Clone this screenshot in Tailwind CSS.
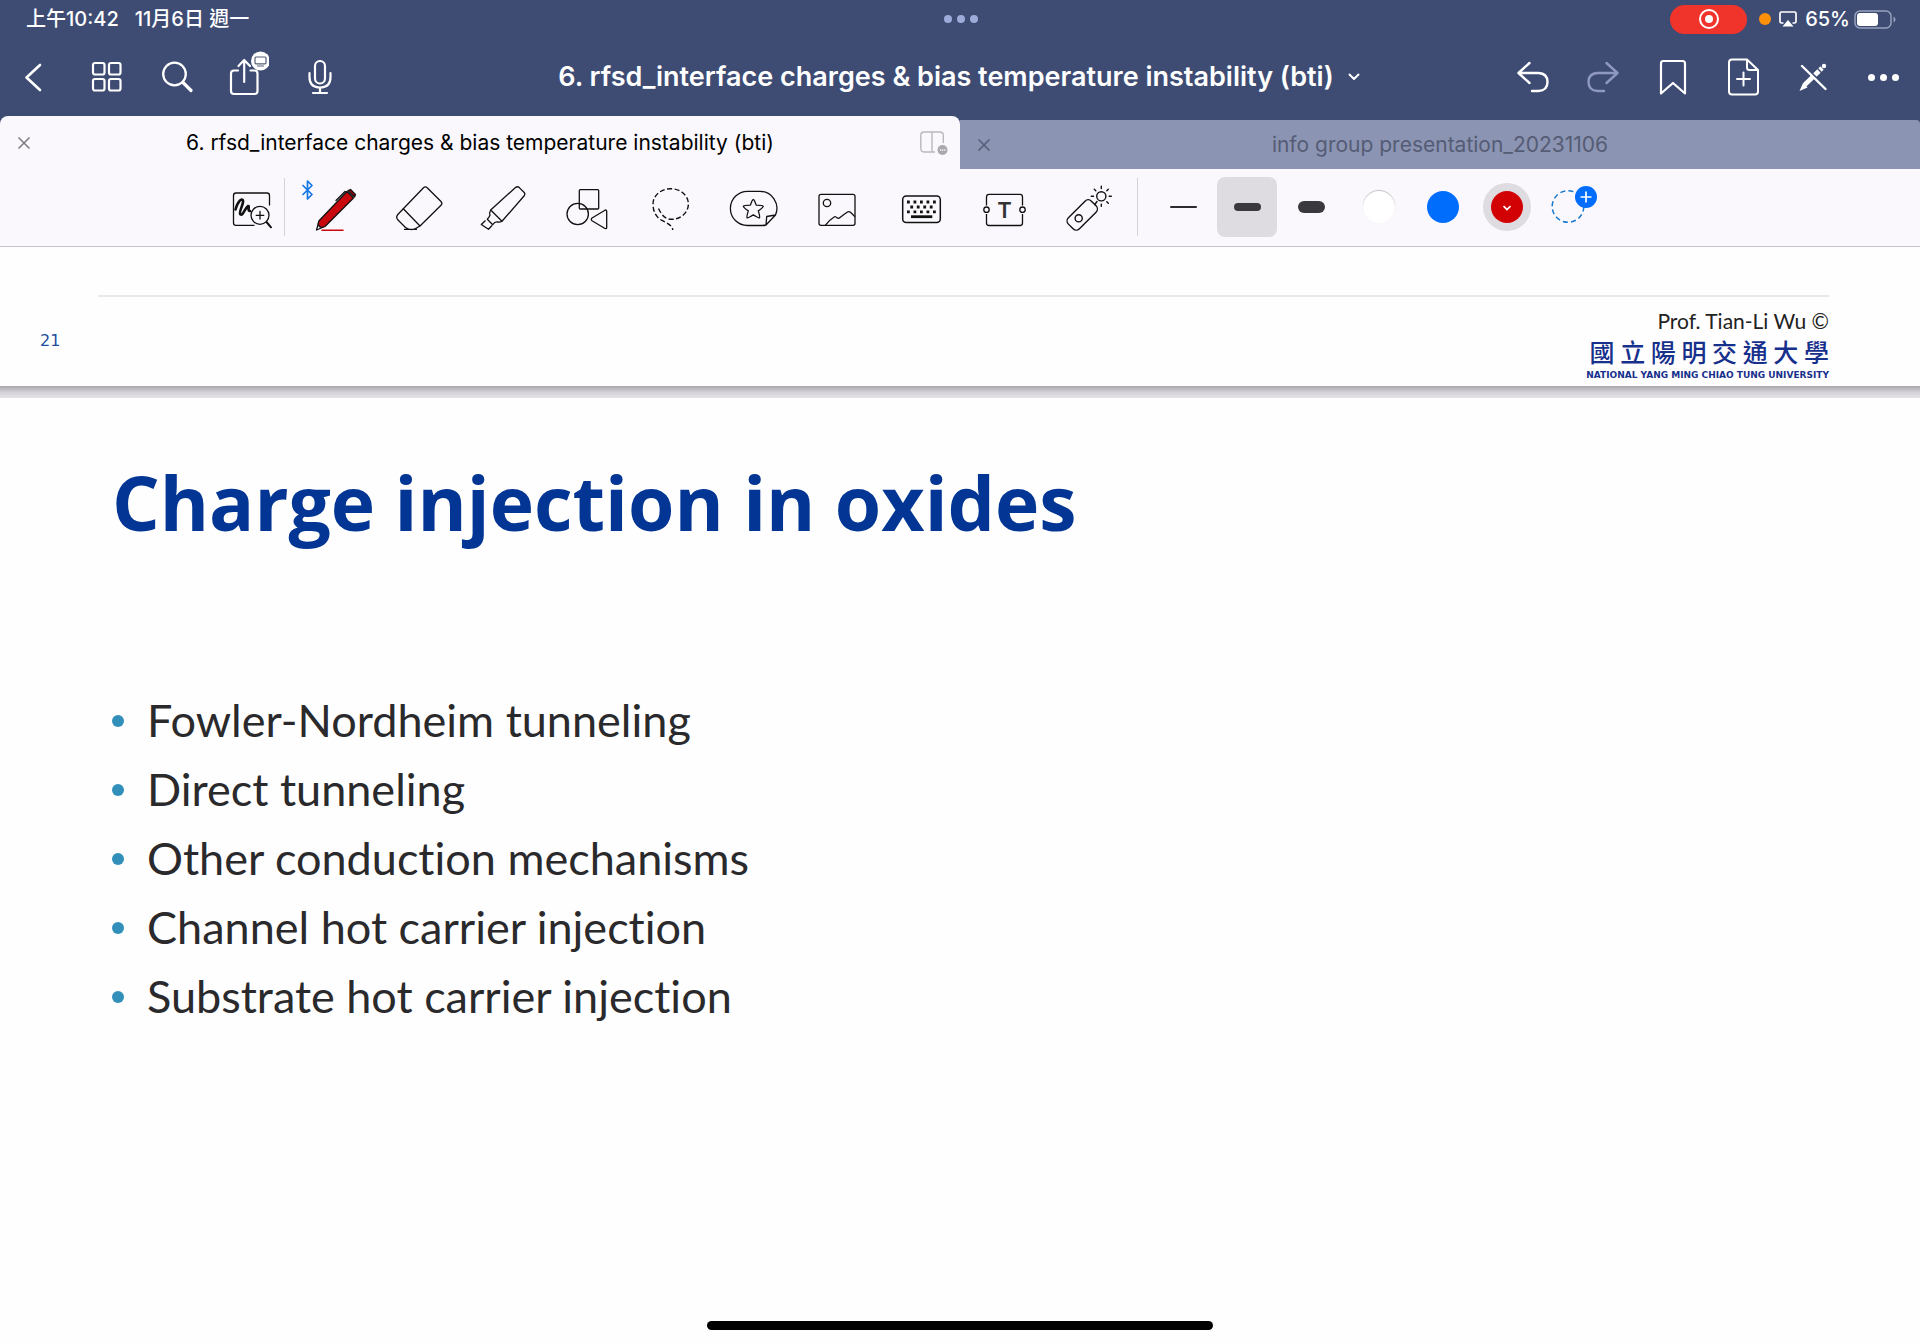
<!DOCTYPE html>
<html lang="zh-Hant">
<head>
<meta charset="utf-8">
<meta name="viewport" content="width=device-width, initial-scale=1">
<title>6. rfsd_interface charges &amp; bias temperature instability (bti)</title>
<script src="https://cdn.jsdelivr.net/npm/@tailwindcss/browser@4"></script>
</head>
<body class="flex min-h-screen flex-col bg-[#fefefe] font-[Inter,'Noto_Sans_CJK_TC',sans-serif] text-black">

<header class="bg-[#3e4c74] text-white">
  <!-- Status bar -->
  <div class="grid h-[38px] grid-cols-3 items-center pl-[26px] pr-6 text-[20px] font-medium leading-6">
    <div class="flex gap-4"><span>上午10:42</span><span>11月6日 週一</span></div>
    <div class="flex justify-center gap-[5px]">
      <span class="size-2 rounded-full bg-[#9dabdb]"></span><span class="size-2 rounded-full bg-[#9dabdb]"></span><span class="size-2 rounded-full bg-[#9dabdb]"></span>
    </div>
    <div class="flex items-center justify-end">
      <span class="mr-3 flex h-[29px] w-[77px] items-center justify-center rounded-full bg-[#f0342b]">
        <svg class="size-5" viewBox="0 0 20 20" fill="none" stroke="#fff" stroke-width="2"><circle cx="10" cy="10" r="9"/><circle cx="10" cy="10" r="4" fill="#fff" stroke="none"/></svg>
      </span>
      <span class="mr-2 size-3 rounded-full bg-[#ff9009]"></span>
      <svg class="mr-2 h-4 w-[18px]" viewBox="0 0 18 16" fill="none" stroke="#fff" stroke-width="1.7"><path d="M4.5 12H2.5Q1 12 1 10.500V2.500Q1 1 2.500 1H15.500Q17 1 17 2.500V10.500Q17 12 15.500 12H13.500"/><path d="M9 9L14.500 15.500H3.500Z" fill="#fff" stroke="none"/></svg>
      <span class="mr-1">65%</span>
      <svg class="h-[19px] w-[42px]" viewBox="0 0 42 19" fill="none"><rect x="1" y="1" width="36" height="17" rx="5" stroke="#98a1bd" stroke-width="1.500"/><rect x="3" y="3" width="21" height="13" rx="3" fill="#fff"/><path d="M39.500 6.500Q41.500 7.500 41.500 9.500T39.500 12.500Z" fill="#98a1bd"/></svg>
    </div>
  </div>

  <!-- Navigation bar -->
  <nav class="flex h-[78px] items-center pr-0.5">
    <div class="flex flex-1">
      <button class="flex h-14 w-[71px] items-center justify-center" aria-label="Back">
        <svg class="size-8" viewBox="0 0 32 32" fill="none" stroke="#fff" stroke-width="2.600" stroke-linecap="round" stroke-linejoin="round"><path d="M20 4L6.500 16.500L20 29"/></svg>
      </button>
      <button class="flex h-14 w-[71px] items-center justify-center" aria-label="Thumbnails">
        <svg class="size-8" viewBox="0 0 32 32" fill="none" stroke="#fff" stroke-width="2.200"><rect x="2" y="2" width="11.500" height="11.500" rx="2"/><rect x="18" y="2" width="11.500" height="11.500" rx="2"/><rect x="2" y="18" width="11.500" height="11.500" rx="2"/><rect x="18" y="18" width="11.500" height="11.500" rx="2"/></svg>
      </button>
      <button class="flex h-14 w-[71px] items-center justify-center" aria-label="Search">
        <svg class="size-8" viewBox="0 0 32 32" fill="none" stroke="#fff" stroke-linecap="round"><circle cx="12.500" cy="13" r="11.300" stroke-width="2.300"/><path d="M21 21.500L29 29.500" stroke-width="3.200"/></svg>
      </button>
      <button class="flex h-14 w-[71px] items-center justify-center" aria-label="Share">
        <svg class="h-[52px] w-10" viewBox="0 0 40 52" fill="none" stroke="#fff" stroke-width="2.200" stroke-linecap="round" stroke-linejoin="round"><path d="M9 19.500H5Q2 19.500 2 22.500V40Q2 43 5 43H25.500Q28.500 43 28.500 40V22.500Q28.500 19.500 25.500 19.500H21.500M15.200 31V10M9.500 15L15.200 9L21 15"/><circle cx="31.500" cy="10" r="9.500" fill="#fff" stroke="none"/><rect x="26" y="6" width="11" height="6.800" rx="1" stroke="#555c75" stroke-width="1.200"/><path d="M28.500 15H34.500" stroke="#555c75" stroke-width="1"/></svg>
      </button>
      <button class="flex h-14 w-[71px] items-center justify-center" aria-label="Record">
        <svg class="h-9 w-6" viewBox="0 0 24 36" fill="none" stroke="#fff" stroke-width="2.200" stroke-linecap="round"><rect x="7" y="2" width="10" height="22.500" rx="5"/><path d="M1.500 14V18Q1.500 28.500 12 28.500T22.500 18V14M12 28.500V34M5 34H19"/></svg>
      </button>
    </div>
    <button class="flex items-center gap-[14px] text-[27px] font-semibold leading-8"><span>6. rfsd_interface charges &amp; bias temperature instability (bti)</span>
      <svg class="h-2 w-3" viewBox="0 0 12 8" fill="none" stroke="#fff" stroke-width="2" stroke-linecap="round" stroke-linejoin="round"><path d="M1.500 1.500L6 6L10.500 1.500"/></svg>
    </button>
    <div class="flex flex-1 justify-end">
      <button class="flex h-14 w-[70px] items-center justify-center" aria-label="Undo">
        <svg class="size-8" viewBox="0 0 32 32" fill="none" stroke="#fff" stroke-width="2.400" stroke-linecap="round" stroke-linejoin="round"><path d="M12.500 2L1.500 12L12.500 22M2 12H21.500Q30.500 12.500 30.500 21T21.500 30H15"/></svg>
      </button>
      <button class="flex h-14 w-[70px] items-center justify-center" aria-label="Redo">
        <svg class="size-8" viewBox="0 0 32 32" fill="none" stroke="#8f98bf" stroke-width="2.400" stroke-linecap="round" stroke-linejoin="round"><path d="M19.500 2L30.500 12L19.500 22M30 12H10.500Q1.500 12.500 1.500 21T10.500 30H17"/></svg>
      </button>
      <button class="flex h-14 w-[70px] items-center justify-center" aria-label="Bookmark">
        <svg class="h-9 w-7" viewBox="0 0 28 36" fill="none" stroke="#fff" stroke-width="2.200" stroke-linejoin="round"><path d="M2 34.500V4.500Q2 2 4.500 2H23.500Q26 2 26 4.500V34.500L14 24Z"/></svg>
      </button>
      <button class="flex h-14 w-[70px] items-center justify-center" aria-label="Add page">
        <svg class="h-[38px] w-8" viewBox="0 0 32 38" fill="none" stroke="#fff" stroke-width="2" stroke-linecap="round" stroke-linejoin="round"><path d="M20 1.500H5Q2 1.500 2 4.500V33.500Q2 36.500 5 36.500H28Q31 36.500 31 33.500V12L20 1.500V9.500Q20 12 22.500 12H31M16.500 14.500V27.500M10 21H23"/></svg>
      </button>
      <button class="flex h-14 w-[70px] items-center justify-center" aria-label="Read-only mode">
        <svg class="size-7" viewBox="0 0 28 28" fill="none" stroke="#fff" stroke-width="4.500"><path d="M5.500 22L20 8" stroke-width="4.600"/><path d="M4 20L0.500 28L8.500 24.500Z" fill="#fff" stroke="none"/><path d="M21 7L23 5" stroke-width="4.600"/><circle cx="25" cy="3" r="2.200" fill="#fff" stroke="none"/><path d="M5 2.500L28 25.500" stroke="#3e4c74" stroke-width="2"/><path d="M3 3L26.500 26" stroke-width="2.400" stroke-linecap="round"/></svg>
      </button>
      <button class="flex h-14 w-[70px] items-center justify-center gap-[5px]" aria-label="More">
        <span class="size-[7px] rounded-full bg-white"></span><span class="size-[7px] rounded-full bg-white"></span><span class="size-[7px] rounded-full bg-white"></span>
      </button>
    </div>
  </nav>

  <!-- Document tabs -->
  <div class="flex h-[53px] items-end text-[21px] leading-6">
    <div class="flex h-full w-1/2 items-center rounded-t-lg bg-[#faf8fc] pl-4 pr-3 text-black">
      <button class="flex size-4 items-center justify-center" aria-label="Close tab"><svg class="size-3" viewBox="0 0 12 12" fill="none" stroke="#7b7a80" stroke-width="1.500"><path d="M.5 .5L11.500 11.500M11.500 .5L.5 11.500"/></svg></button>
      <a href="#current" class="flex-1 pl-2 text-center">6. rfsd_interface charges &amp; bias temperature instability (bti)</a>
      <svg class="h-6 w-7" viewBox="0 0 28 24" fill="none" stroke="#b9b8bd" stroke-width="1.400"><path d="M15 21H4Q.8 21 .8 17.500V4.500Q.8 1 4 1H20Q23.300 1 23.300 4.500V12M12 1V21"/><circle cx="22.500" cy="19" r="5" fill="#a9a8ad" stroke="none"/><path d="M20 19H25.500" stroke="#faf8fc" stroke-dasharray="1.200 .9"/></svg>
    </div>
    <div class="flex h-[49px] w-1/2 items-center rounded-tr bg-[#8b94b2] px-[18px] text-[#555c75]">
      <button class="flex size-3 items-center justify-center" aria-label="Close tab"><svg class="size-3" viewBox="0 0 12 12" fill="none" stroke="#555c75" stroke-width="1.500"><path d="M.5 .5L11.500 11.500M11.500 .5L.5 11.500"/></svg></button>
      <a href="#info" class="flex-1 pr-3 text-center">info group presentation_20231106</a>
    </div>
  </div>
</header>

<!-- Drawing toolbar -->
<div class="flex h-[78px] items-center border-b border-[#c6c5ca] bg-[#faf8fc] pb-px pl-[224px]" role="toolbar" aria-label="Tools">
  <button class="flex h-14 w-[60px]" aria-label="Zoom window">
    <svg class="size-14" viewBox="0 0 56 56" fill="none" stroke="#111" stroke-width="1.300" stroke-linecap="round"><path d="M45.500 26V16.500Q45.500 14 43 14H12Q9.500 14 9.500 16.500V44Q9.500 46.300 12 46.300H30"/><path d="M11.500 30.500C14 22 18 18.500 19 21.500C20 25 14 33.500 16.500 35.500C19 37 21 29 24 27C26 26.500 23 32.500 26 32" stroke-width="2.600"/><circle cx="36" cy="36.300" r="9"/><path d="M42.500 43L47 48.300" stroke-width="2"/><path d="M36 32.500V40M32.200 36.300H39.800"/></svg>
  </button>
  <span class="h-[58px] w-px bg-[#d3d2d7]"></span>
  <div class="ml-[9px] grid w-[836px] grid-cols-10 justify-items-center">
    <button aria-label="Pen"><svg class="size-14 overflow-visible" viewBox="0 0 56 56" fill="none" stroke="#111" stroke-width="1.300" stroke-linecap="round" stroke-linejoin="round"><path d="M-5 6.500L4 15.500L-.5 20V2L4 6.500L-5 15.500" stroke="#1477e8" stroke-width="1.700"/><path d="M10.500 44L8.500 51L14.500 48.500"/><path d="M10.800 42L39 12.500L45.500 19L17 47.500Q13 49.500 11 47Q9.500 45 10.800 42Z" fill="#c8080d"/><path d="M40 11.500L42.500 10.500L47.500 15.500L46.500 18Z" fill="#a8080c"/><path d="M28 21.500L37 12.500L39.500 13.500"/><path d="M14 51.300H35" stroke="#c8080d" stroke-width="1.500"/></svg></button>
    <button aria-label="Eraser"><svg class="size-14" viewBox="0 0 56 56" fill="none" stroke="#111" stroke-width="1.300" stroke-linejoin="round"><path d="M12.300 29.700L32.500 8.800Q34.300 7 36.200 8.800L50 22.500Q51.800 24.300 50 26.200L29 47Z"/><path d="M12.300 29.700L6.800 35.500Q4.500 38.500 7 41L14.500 48.500Q19.500 52 24.500 49.500L29 47M13 50.300H26"/></svg></button>
    <button aria-label="Highlighter"><svg class="size-14" viewBox="0 0 56 56" fill="none" stroke="#111" stroke-width="1.300" stroke-linejoin="round"><path d="M15.700 31L40.500 8.500Q42.500 7 44.300 8.600L49.200 13.500Q50.500 15 49 17L27 42.300Z"/><path d="M15.700 31Q14 34 15 36Q14.500 38 12.300 40.300L17.700 45.700Q20 42.500 22.500 43Q25 43.500 27 42.300M10.500 41.500L6.300 45.500L13.500 50.300L17 46.500"/></svg></button>
    <button aria-label="Shapes"><svg class="size-14" viewBox="0 0 56 56" fill="none" stroke="#111" stroke-width="1.300" stroke-linejoin="round"><rect x="20.300" y="10.700" width="19.400" height="19.300" rx="1"/><circle cx="18.700" cy="35" r="10.700"/><path d="M33 39Q31.500 40.300 33 41.800L46 49.500Q47.700 50 47.700 48.500V32.500Q47.700 30.500 46 31.200Z"/></svg></button>
    <button aria-label="Lasso"><svg class="size-14" viewBox="0 0 56 56" fill="none" stroke="#111" stroke-width="1.400" stroke-dasharray="5 2.500"><path d="M16.500 29.500C20 37 24 40.300 29.500 40.300C39 40.300 46.400 33.500 46.400 25C46.400 16.500 38.500 9.700 28.700 9.700C18.900 9.700 11 16.500 11 25C11 33 14.500 38.500 20 41.500C25 44 30 46 30.800 51"/></svg></button>
    <button aria-label="Sticker"><svg class="size-14" viewBox="0 0 56 56" fill="none" stroke="#111" stroke-width="1.300" stroke-linejoin="round"><path d="M40 46Q38 46.500 36 46.500H21.500A17 17 0 0 1 21.500 12.300H33.500A17 17 0 0 1 49.500 36L40 46L40.700 37.500L49.500 36"/><path d="M27.300 20.500Q28.300 20.500 30.200 26.100Q36.500 26.200 37.300 27.300Q37.200 28.500 32.300 31.900Q34.200 38 33.500 38.800Q32.500 39.300 27.300 35.800Q22.100 39.300 21.100 38.800Q20.400 38 22.300 31.900Q17.400 28.500 17.300 27.300Q18.100 26.200 24.400 26.100Q26.300 20.500 27.300 20.500Z"/></svg></button>
    <button aria-label="Image"><svg class="size-14" viewBox="0 0 56 56" fill="none" stroke="#111" stroke-width="1.300" stroke-linejoin="round"><rect x="10" y="15.300" width="36" height="31" rx="2"/><circle cx="18" cy="24" r="3.700"/><path d="M16.300 46.300Q21 40.500 25.500 37.800Q26.500 37 28 38.800Q29.500 39.800 31 38.500Q35.500 35 38.500 33Q40 32 42 33.800L46 37.700"/></svg></button>
    <button aria-label="Keyboard"><svg class="size-14" viewBox="0 0 56 56" fill="none" stroke="#111" stroke-width="2.800"><rect x="9.700" y="17" width="37.600" height="26.500" rx="3.500" stroke-width="1.500"/><path d="M14 23H43" stroke-dasharray="2.800 3.700"/><path d="M17.300 28H40" stroke-dasharray="2.800 3.700"/><path d="M14 32.800H43" stroke-dasharray="2.800 3.700"/><path d="M18 37.700H39.300"/></svg></button>
    <button aria-label="Text box"><svg class="size-14" viewBox="0 0 56 56" fill="none" stroke="#111" stroke-width="1.300"><path d="M9.500 26.500V18Q9.500 15.300 12 15.300H43Q45.500 15.300 45.500 18V26.500M9.500 35V44Q9.500 46.500 12 46.500H43Q45.500 46.500 45.500 44V35"/><circle cx="9.500" cy="30.700" r="2.700"/><circle cx="45.500" cy="30.700" r="2.700"/><text x="27.500" y="39" text-anchor="middle" font-family="Inter" font-size="22" font-weight="600" fill="#333" stroke="none">T</text></svg></button>
    <button aria-label="Laser pointer"><svg class="size-14" viewBox="0 0 56 56" fill="none" stroke="#111" stroke-width="1.400" stroke-linecap="round"><rect x="6" y="28.200" width="32.500" height="15.600" rx="4.500" transform="rotate(-45 22.200 36)"/><circle cx="18.700" cy="39.300" r="3.600"/><path d="M34.800 25.500L37 22.500"/><circle cx="41.300" cy="17.300" r="4.600"/><path d="M41.300 9.500V7.300M41.300 25.200V27.300M33.500 17.300H31.300M49.200 17.300H51.300M35.800 11.800L34.300 10.300M46.800 11.800L48.300 10.300M46.800 22.800L48.300 24.300"/></svg></button>
  </div>
  <span class="ml-[7px] h-[58px] w-px bg-[#d3d2d7]"></span>
  <div class="ml-[15px] flex items-center gap-1">
    <button class="flex size-[60px] items-center justify-center rounded-lg" aria-label="Thin stroke"><span class="h-0.5 w-[27px] rounded-full bg-[#2b2a2d]"></span></button>
    <button class="flex size-[60px] items-center justify-center rounded-lg bg-[#dedce1]" aria-label="Medium stroke"><span class="h-2 w-[27px] rounded-full bg-[#3a393d]"></span></button>
    <button class="flex size-[60px] items-center justify-center rounded-lg" aria-label="Thick stroke"><span class="h-3 w-[27px] rounded-full bg-[#3a393d]"></span></button>
  </div>
  <div class="ml-[14px] flex items-center gap-4">
    <button class="flex size-12 items-center justify-center rounded-full" aria-label="White"><span class="size-8 rounded-full bg-white shadow-[0_-1px_1px_rgba(0,0,0,0.22)]"></span></button>
    <button class="flex size-12 items-center justify-center rounded-full" aria-label="Blue"><span class="size-8 rounded-full bg-[#006dfc]"></span></button>
    <button class="flex size-12 items-center justify-center rounded-full bg-[#dedce1]" aria-label="Red"><span class="flex size-8 items-center justify-center rounded-full bg-[#d20104]"><svg class="size-2" viewBox="0 0 8 8" fill="none" stroke="#fff" stroke-width="1.700"><path d="M.5 3L4 6.500L7.500 3"/></svg></span></button>
    <button class="size-12" aria-label="Add colour"><svg class="size-12 overflow-visible" viewBox="0 0 48 48" fill="none"><circle cx="21" cy="23.500" r="15.800" stroke="#1477d0" stroke-width="1.500" stroke-dasharray="5 3.270"/><circle cx="39" cy="14" r="11" fill="#006dfc"/><path d="M39 8.500V19.500M33.500 14H44.500" stroke="#fff" stroke-width="1.700"/></svg></button>
  </div>
</div>

<main class="flex flex-1 flex-col">
  <!-- Bottom of the previous slide -->
  <section class="flex h-[139px] flex-col pt-12">
    <div class="ml-[98px] mr-[91px] h-0.5 shrink-0 bg-[#e9e8ec]"></div>
    <div class="flex items-start justify-between pl-10 pr-[91px]">
      <span class="pt-[34px] font-['DejaVu_Sans',sans-serif] text-[16px] leading-5 text-[#1f4e9e]">21</span>
      <div class="flex flex-col items-end pt-3 text-right">
        <span class="font-[Lato,sans-serif] text-[21px] leading-6 text-[#222]">Prof. Tian-Li Wu ©</span>
        <span class="pt-1 font-['Noto_Sans_CJK_TC',sans-serif] text-[25px] font-medium leading-7 text-[#17308c]">國 立 陽 明 交 通 大 學</span>
        <span class="font-['DejaVu_Sans',sans-serif] text-[9px] font-bold leading-[21px] text-[#17308c]">NATIONAL YANG MING CHIAO TUNG UNIVERSITY</span>
      </div>
    </div>
  </section>
  <div class="h-3 bg-linear-to-b from-[#a9a7ac] via-[#d3d1d6] to-[#e4e2e7]"></div>

  <!-- Current slide -->
  <section class="flex flex-1 flex-col px-28 pt-14">
    <h1 class="font-['Open_Sans',sans-serif] text-[75px] font-bold leading-[96px] text-[#033694]">Charge injection in oxides</h1>
    <ul class="mt-[136px] font-[Lato,sans-serif] text-[45px] leading-[69px] text-[#2a292c] [font-variant-ligatures:none]">
      <li class="flex items-center gap-[23px]"><span class="size-3 rounded-full bg-[#318fb9]"></span>Fowler-Nordheim tunneling</li>
      <li class="flex items-center gap-[23px]"><span class="size-3 rounded-full bg-[#318fb9]"></span>Direct tunneling</li>
      <li class="flex items-center gap-[23px]"><span class="size-3 rounded-full bg-[#318fb9]"></span>Other conduction mechanisms</li>
      <li class="flex items-center gap-[23px]"><span class="size-3 rounded-full bg-[#318fb9]"></span>Channel hot carrier injection</li>
      <li class="flex items-center gap-[23px]"><span class="size-3 rounded-full bg-[#318fb9]"></span>Substrate hot carrier injection</li>
    </ul>
  </section>
  <div class="flex justify-center pb-3"><span class="h-[9px] w-[506px] rounded-full bg-black"></span></div>
</main>
</body>
</html>
